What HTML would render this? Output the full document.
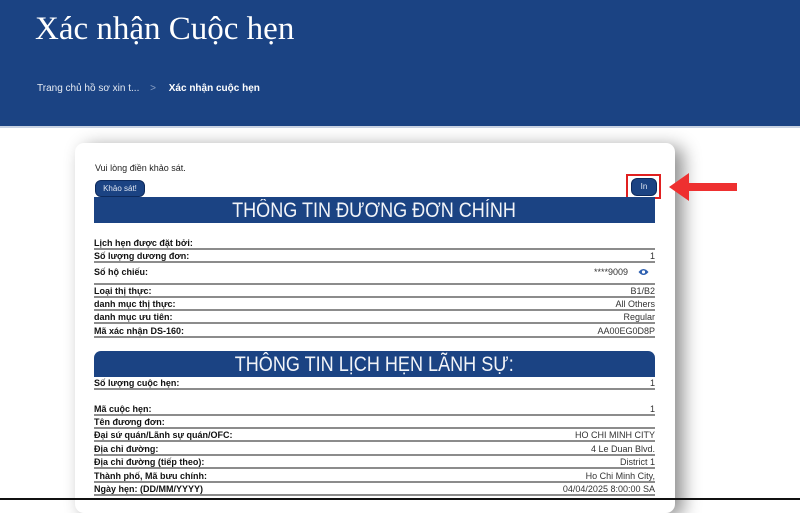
<!DOCTYPE html>
<html><head><meta charset="utf-8"><style>
*{margin:0;padding:0;box-sizing:border-box}
body{width:800px;height:500px;overflow:hidden;background:#fff;position:relative;font-family:"Liberation Sans","Noto Sans CJK SC",sans-serif}
.hdr{position:absolute;left:0;top:0;width:800px;height:128px;background:#1b4383;border-bottom:2px solid #c9d3e3}
.hdr h1{position:absolute;left:35px;top:11px;font-family:"Liberation Serif","Noto Serif CJK SC",serif;font-weight:normal;font-size:33px;color:#fff}
.bc{position:absolute;left:37px;top:83px;font-size:10px;color:#e6ebf3}
.bc b{color:#fff;margin-left:10px}
.bc i{font-style:normal;color:#8aa0c4;margin-left:8px}
.card{position:absolute;left:75px;top:143px;width:600px;height:370px;background:#fff;border-radius:9px;box-shadow:8px 4px 18px rgba(0,0,0,.45)}
.t{position:absolute;font-size:9px;color:#222}
.btn{position:absolute;background:#1b4383;color:#dfe6f2;font-size:8px;border-radius:6px;text-align:center;border:1px solid #0d2a5c}
.ban{position:absolute;left:94px;width:561px;background:#1b4383;color:#f2f4f8;text-align:center;font-size:21px;font-weight:300}
.ban span{display:inline-block;transform:scaleX(.86)}
.row{position:absolute;left:94px;width:561px;height:13px;border-bottom:2px solid #8c8c8c;font-size:9px;font-weight:bold;color:#111;line-height:12px}
.row span{position:absolute;right:0;top:0;font-weight:normal;color:#333}
</style></head><body>
<div class="hdr"><h1>Xác nhận Cuộc hẹn</h1>
<div class="bc">Trang chủ hồ sơ xin t... <i>&gt;</i> <b>Xác nhận cuộc hẹn</b></div></div>
<div class="card"></div>
<div class="t" style="left:95px;top:163px">Vui lòng điền khảo sát.</div>
<div class="btn" style="left:95px;top:180px;width:50px;height:17px;line-height:15px">Khảo sát!</div>
<div class="btn" style="left:631px;top:178px;width:26px;height:18px;line-height:16px">In</div>
<div style="position:absolute;left:626px;top:174px;width:35px;height:25px;border:2px solid #e02020"></div>
<svg style="position:absolute;left:667px;top:171px" width="72" height="32"><polygon points="2,16 22,2 22,12 70,12 70,20 22,20 22,30" fill="#ee3030"/></svg>
<div class="ban" style="top:197px;height:26px;line-height:27px"><span>THÔNG TIN ĐƯƠNG ĐƠN CHÍNH</span></div>
<div class="row" style="top:237px">Lịch hẹn được đặt bởi:</div>
<div class="row" style="top:250px">Số lượng dương đơn:<span>1</span></div>
<div class="row" style="top:266px;height:19px">Số hộ chiếu:<span style="right:6px">****9009 &nbsp;&nbsp;&nbsp;<svg width="11" height="8" viewBox="0 0 11 8" style="vertical-align:-1px"><path d="M0.5 4Q5.5 -2 10.5 4Q5.5 10 0.5 4Z" fill="#2d5fb0"/><circle cx="5.5" cy="4" r="1.6" fill="#fff"/></svg></span></div>
<div class="row" style="top:285px">Loại thị thực:<span>B1/B2</span></div>
<div class="row" style="top:298px">danh mục thị thực:<span>All Others</span></div>
<div class="row" style="top:311px">danh mục ưu tiên:<span>Regular</span></div>
<div class="row" style="top:325px">Mã xác nhận DS-160:<span>AA00EG0D8P</span></div>
<div class="ban" style="top:351px;height:26px;line-height:28px;border-radius:7px 7px 0 0"><span>THÔNG TIN LỊCH HẸN LÃNH SỰ:</span></div>
<div class="row" style="top:377px">Số lượng cuộc hẹn:<span>1</span></div>
<div class="row" style="top:403px">Mã cuộc hẹn:<span>1</span></div>
<div class="row" style="top:416px">Tên đương đơn:</div>
<div class="row" style="top:429px">Đại sứ quán/Lãnh sự quán/OFC:<span>HO CHI MINH CITY</span></div>
<div class="row" style="top:443px">Địa chỉ đường:<span>4 Le Duan Blvd.</span></div>
<div class="row" style="top:456px">Địa chỉ đường (tiếp theo):<span>District 1</span></div>
<div class="row" style="top:470px">Thành phố, Mã bưu chính:<span>Ho Chi Minh City,</span></div>
<div class="row" style="top:483px">Ngày hẹn: (DD/MM/YYYY)<span>04/04/2025 8:00:00 SA</span></div>
<div style="position:absolute;left:0;top:498px;width:800px;height:2px;background:#111"></div>
</body></html>
